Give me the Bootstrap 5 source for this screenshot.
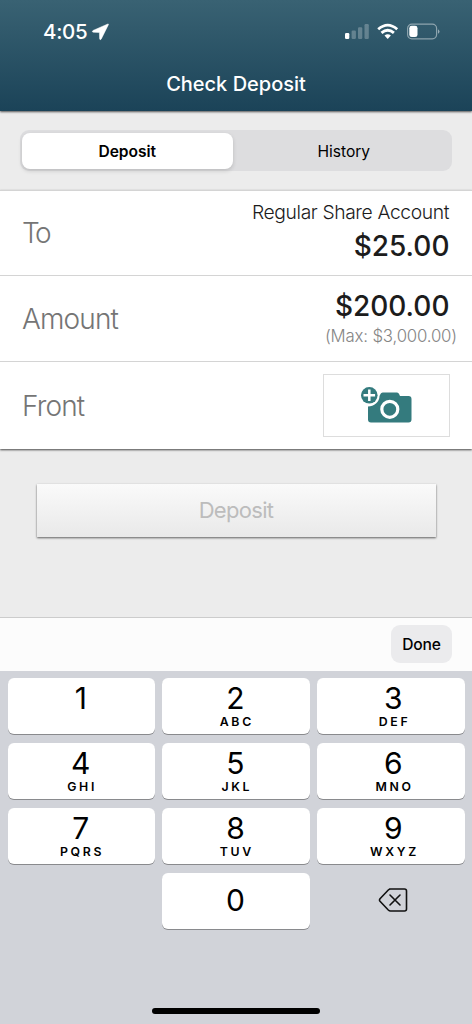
<!DOCTYPE html>
<html lang="en">
<head>
<meta charset="utf-8">
<meta name="viewport" content="width=device-width, initial-scale=1">
<title>Check Deposit</title>
<link href="https://cdn.jsdelivr.net/npm/bootstrap@5.3.0/dist/css/bootstrap.min.css" rel="stylesheet">
<style>
  body { font-family: Inter, "Liberation Sans", sans-serif; background: #ececec; color: #1c1c1c; line-height: 1.2; }
  .screen { width: 472px; height: 1024px; }
  .app-header { height: 110.5px; background: linear-gradient(#396273, #1b4358); box-shadow: 0 1px 2px rgba(0,0,0,.65); color: #fff; }
  .status-bar { height: 56px; padding: 8px 32px 0 43px; }
  .clock { font-size: 20.5px; font-weight: 500; letter-spacing: -.3px; }
  .app-title { font-size: 20px; font-weight: 500; height: 56px; }
  .segment-wrap { height: 79px; padding: 19.5px 20px 0; }
  .segment { height: 41px; border-radius: 9px; background: #dddddf; padding: 2.5px 2px; font-size: 15.6px; color: #000; }
  .segment button { font: inherit; color: inherit; border: 0; background: none; border-radius: 8px; padding: 3px 0 0 5px; letter-spacing: -.05px; }
  .segment .on { background: #fff; font-weight: 600; box-shadow: 0 2px 4px rgba(0,0,0,.15); flex: 0 0 210.5px; padding-left: 0; }
  .form-rows { background: #fff; box-shadow: 0 1px 2px rgba(0,0,0,.7); }
  .form-line { height: 85.9px; border-top: 1px solid #d4d4d4; padding: 0 22px; }
  .form-line:last-child { height: 87.3px; }
  .line-label { font-size: 28px; font-weight: 300; color: #757575; letter-spacing: -.85px; padding-top: 2px; }
  .label-tight { letter-spacing: -2.5px; }
  .acct { font-size: 19.3px; font-weight: 300; line-height: 24px; letter-spacing: -.39px; margin: -2px 1px 5px 0; }
  .money { font-size: 28px; font-weight: 500; line-height: 34px; margin-right: .5px; }
  .limit { font-size: 16.8px; font-weight: 300; color: #858585; line-height: 22px; margin: 2px -7px 2px 0; letter-spacing: -.17px; }
  .photo-btn { width: 127px; height: 63px; border: 1px solid #ddd; background: #fff; padding: 1px 1px 0 0; }
  .submit-wrap { padding: 35px 36.5px 0; height: 168.5px; }
  .submit { width: 100%; height: 53.5px; border: 0; border-radius: 0; background: linear-gradient(#fafafa, #e9e9e9); box-shadow: 0 1px 2px rgba(0,0,0,.6); font-size: 22px; letter-spacing: -.7px; color: #bcbcbc; }
  .kb-tools { height: 54px; background: #fcfcfc; border-top: 1px solid #ccc; padding: 0 20px 2px 0; }
  .done-btn { width: 61px; height: 38px; border: 0; border-radius: 9px; background: #ebebed; font-size: 15.6px; font-weight: 500; color: #000; padding: 3px 0 0; letter-spacing: -.2px; }
  .keypad { height: 353px; background: #d1d3d9; padding: 7px 7.5px 0; }
  .keys { display: grid; grid-template-columns: repeat(3, 1fr); grid-auto-rows: 56px; gap: 9.1px 7.2px; }
  .keycap { border: 0; border-radius: 6px; background: #fff; box-shadow: 0 1px 0 #898a8d; color: #000; padding: 0 1px 3px 0; }
  .keycap:nth-child(3n) { padding: 0 0 3px 5px; }
  .digit { font-size: 30px; line-height: 36px; }
  .letters { font-size: 12.3px; font-weight: 600; letter-spacing: 2.7px; line-height: 14px; margin-right: -2.7px; min-height: 14px; margin-top: -1px; }
  .keycap.plain { background: none; box-shadow: none; }
  .home-bar { width: 168px; height: 6px; border-radius: 3px; background: #000; margin-bottom: 10px; }
</style>
</head>
<body>
<div class="screen d-flex flex-column overflow-hidden">
  <header class="app-header position-relative flex-shrink-0">
    <div class="status-bar d-flex align-items-center justify-content-between">
      <div class="d-flex align-items-center">
        <span class="clock">4:05</span>
        <svg class="ms-1" width="19" height="18" viewBox="0 0 19 18"><path d="M16.800 1 2 7.500Q.4 8.900 2.300 9.200L8.400 9.500 8.600 15.800Q9.200 17.700 10.300 15.900L17.400 1.700Q17.600.6 16.800 1Z" fill="#fff" stroke="#fff" stroke-width=".5"/></svg>
      </div>
      <svg width="96" height="18" viewBox="0 0 96 18">
        <g fill="#fff"><rect x="1" y="10" width="4.300" height="6" rx="1.200"/>
        <g opacity=".25"><rect x="7.600" y="7.500" width="4.300" height="8.500" rx="1.200"/><rect x="14" y="4.200" width="4.300" height="11.800" rx="1.200"/><rect x="20.500" y="1" width="4.300" height="15" rx="1.200"/></g></g>
        <g fill="none" stroke="#fff" stroke-width="2.800"><path d="M34.200 6.300Q43.700-2 53.200 6.300"/><path d="M37.500 9.900Q43.700 4.500 49.900 9.900"/></g>
        <path d="M40.500 12.500Q43.700 9.800 46.900 12.500L43.700 16Z" fill="#fff"/>
        <rect x="63.600" y="1.100" width="29" height="14.800" rx="4.300" fill="none" stroke="#fff" stroke-opacity=".45" stroke-width="1.200"/>
        <rect x="65.300" y="2.800" width="8.200" height="11.300" rx="2.400" fill="#fff"/>
        <path d="M94 6.200Q97 8.500 94 10.800Z" fill="#fff" opacity=".5"/>
      </svg>
    </div>
    <h1 class="app-title d-flex align-items-center justify-content-center m-0">Check Deposit</h1>
  </header>
  <nav class="segment-wrap flex-shrink-0">
    <div class="segment d-flex"><button class="on">Deposit</button><button class="flex-fill">History</button></div>
  </nav>
  <main class="flex-shrink-0">
    <section class="form-rows position-relative">
      <div class="form-line d-flex align-items-center justify-content-between">
        <span class="line-label label-tight">To</span>
        <div class="text-end"><div class="acct">Regular Share Account</div><div class="money">$25.00</div></div>
      </div>
      <div class="form-line d-flex align-items-center justify-content-between">
        <span class="line-label">Amount</span>
        <div class="text-end"><div class="money">$200.00</div><div class="limit">(Max: $3,000.00)</div></div>
      </div>
      <div class="form-line d-flex align-items-center justify-content-between">
        <span class="line-label">Front</span>
        <button class="photo-btn d-flex align-items-center justify-content-center" aria-label="Add front photo">
          <svg width="52" height="38" viewBox="0 0 52 38">
            <path d="M20.500 7Q21 5.500 22.700 5.500H37Q38.500 5.500 39.200 7.200L40 9H48.500Q51.500 9 51.500 12V32.500Q51.500 35.500 48.500 35.500H11Q8 35.500 8 32.500V19.500C14 19.500 19.500 15 19.500 9Z" fill="#347b7e"/>
            <circle cx="29.800" cy="22.300" r="8" fill="none" stroke="#fff" stroke-width="3.200"/>
            <circle cx="9.300" cy="8.300" r="8.300" fill="#347b7e"/>
            <path d="M9.300 2.500V14.100M3.500 8.300H15.100" stroke="#fff" stroke-width="2.500"/>
          </svg>
        </button>
      </div>
    </section>
    <div class="submit-wrap"><button class="submit" disabled>Deposit</button></div>
  </main>
  <div class="kb-tools d-flex align-items-center justify-content-end flex-shrink-0"><button class="done-btn">Done</button></div>
  <footer class="keypad d-flex flex-column flex-shrink-0">
    <div class="keys">
      <button class="keycap"><div class="digit">1</div><div class="letters"></div></button>
      <button class="keycap"><div class="digit">2</div><div class="letters">ABC</div></button>
      <button class="keycap"><div class="digit">3</div><div class="letters">DEF</div></button>
      <button class="keycap"><div class="digit">4</div><div class="letters">GHI</div></button>
      <button class="keycap"><div class="digit">5</div><div class="letters">JKL</div></button>
      <button class="keycap"><div class="digit">6</div><div class="letters">MNO</div></button>
      <button class="keycap"><div class="digit">7</div><div class="letters">PQRS</div></button>
      <button class="keycap"><div class="digit">8</div><div class="letters">TUV</div></button>
      <button class="keycap"><div class="digit">9</div><div class="letters">WXYZ</div></button>
      <span></span>
      <button class="keycap"><div class="digit">0</div></button>
      <button class="keycap plain" aria-label="Delete">
        <svg width="30" height="26" viewBox="0 0 30 26" fill="none" stroke="#111" stroke-width="1.600" stroke-linejoin="round" stroke-linecap="round"><path d="M11.500 2H26.500Q28.500 2 28.500 4V22Q28.500 24 26.500 24H12.500Q11.300 24 10.300 23L2 14.300Q1 13 2 11.700L10.300 3Q11.300 2 12.500 2Z"/><path d="M12 8 22 18M22 8 12 18"/></svg>
      </button>
    </div>
    <div class="home-bar mx-auto mt-auto"></div>
  </footer>
</div>
<script src="https://cdn.jsdelivr.net/npm/bootstrap@5.3.0/dist/js/bootstrap.bundle.min.js"></script>
</body>
</html>
